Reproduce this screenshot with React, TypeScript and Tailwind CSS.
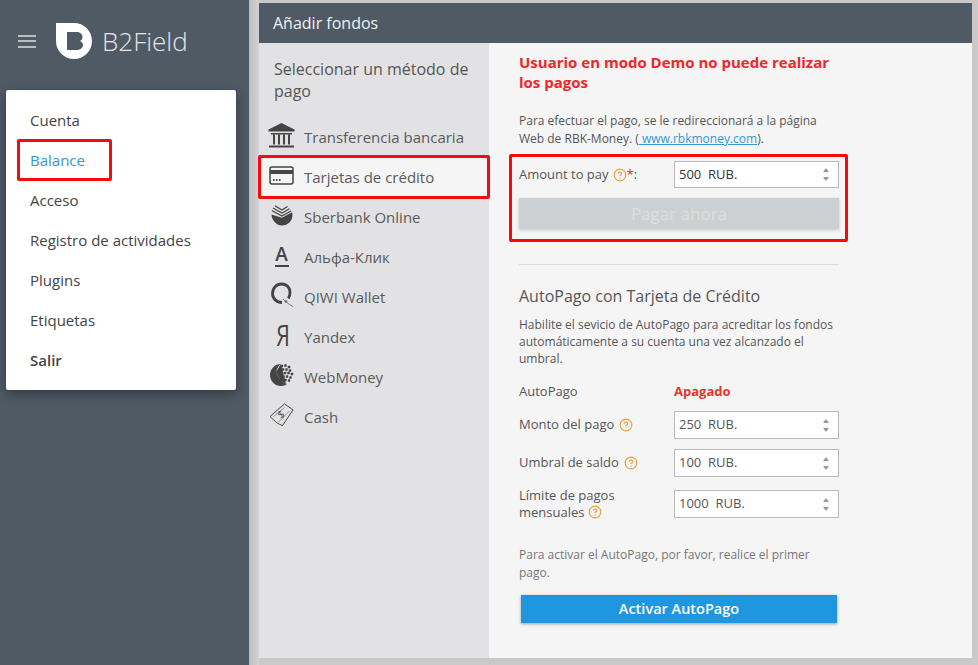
import { CircleHelp } from "lucide-react";

const MENU = ["Cuenta", "Balance", "Acceso", "Registro de actividades", "Plugins", "Etiquetas", "Salir"];

function Logo() {
  return (
    <svg width="36" height="36" viewBox="0 0 36 36" className="shrink-0">
      <path
        fillRule="evenodd"
        fill="#fff"
        d="M0 0H18A18 18 0 0 1 18 36A18 18 0 0 1 0 18ZM11 9V27H20C24 27 27 25 27 22C27 20 26 19 24 18C26 17 26.500 15.500 26.500 14C26.500 11 24 9 20 9Z"
      />
    </svg>
  );
}

function BankIcon() {
  return (
    <svg width="27" height="25" viewBox="0 0 27 25" fill="#444">
      <path d="M13.500 0L26.500 6.500V8.500H.5V6.500Z" />
      <path d="M3 10H24V11.500H3ZM1 22.500H26V24.500H1Z" />
      <path d="M5 11.500H7V21.500H5ZM10 11.500H12V21.500H10ZM15 11.500H17V21.500H15ZM20 11.500H22V21.500H20Z" />
    </svg>
  );
}

function CardIcon() {
  return (
    <svg width="25" height="19" viewBox="0 0 25 19">
      <rect x="1" y="1" width="23" height="17" rx="2" fill="none" stroke="#444" strokeWidth="1.500" />
      <rect x="1" y="4" width="23" height="4" fill="#444" />
      <path d="M4 13H5.500V15H4ZM7 13H8.500V15H7ZM10 13H11.500V15H10Z" fill="#444" />
    </svg>
  );
}

function SberIcon() {
  return (
    <svg width="22" height="21" viewBox="0 0 22 21" fill="none">
      <path d="M.5 9.500C.8 15.500 5.500 20.500 11 20.500C16.800 20.500 21.500 16 21.500 10C21.500 9 21.300 8 21 7.200L11 12.800Z" fill="#444" />
      <path d="M.8 5.500L11 11L20 6M2 3L11 8L18.500 3.800M4 .8L11 5L16.500 1.500" stroke="#444" strokeWidth="1.200" />
    </svg>
  );
}

function AlfaIcon() {
  return (
    <div className="mt-[2px] flex w-[16px] flex-col items-center">
      <span className="text-[19px] leading-[18px] font-semibold text-[#444]">А</span>
      <span className="mt-[2px] h-[2px] w-[14px] bg-[#444]" />
    </div>
  );
}

function QiwiIcon() {
  return (
    <svg width="24" height="26" viewBox="0 0 24 26" fill="none">
      <path d="M12 20.500C6.500 20.500 2.500 16.500 2.500 11.500C2.500 6 6.500 2 11.500 2C17 2 20 6 20 10.500C20 13 19.300 15 18.300 16.500" stroke="#444" strokeWidth="2.800" />
      <path d="M13 17C15 19 18 22 23 24.500" stroke="#777" strokeWidth="1" />
      <circle cx="16" cy="19.500" r="1.300" fill="#666" />
    </svg>
  );
}

function YandexIcon() {
  return <span className="block w-[16px] scale-x-[.72] text-center text-[30px] leading-[24px] text-[#444]">Я</span>;
}

function WebMoneyIcon() {
  const dots: [number, number][] = [
    [12, 3], [15.5, 2.5], [19, 4],
    [9.5, 6.5], [13, 6.5], [16.500, 6.5], [20, 7.5],
    [8, 10], [11.500, 10], [15, 10], [18.500, 10], [22, 11],
    [10, 13.500], [13.500, 13.500], [17, 13.500], [20.500, 14.500],
    [12, 17], [15.5, 17], [19, 17.500],
  ];
  return (
    <svg width="24" height="24" viewBox="0 0 24 24" fill="#444">
      <path d="M11 1A11 11 0 0 0 11 23C13.500 23 15.500 22.200 17 21C13 20 8 15 6.500 10C6 7 8 3 11 1Z" />
      <path d="M6 9L11 1L16 21L10 17Z" />
      {dots.map(([x, y]) => (
        <rect key={`${x}-${y}`} x={x - 1.2} y={y - 1.2} width="2.400" height="2.400" rx=".5" />
      ))}
    </svg>
  );
}

function CashIcon() {
  return (
    <svg width="25" height="24" viewBox="0 0 25 24" fill="none">
      <path d="M1 13.500L15.500 .8C17 2.500 20.500 4 24 7L13.500 22.500C11.500 22 9 20.500 7.500 19.500C6 18 3 15.500 1 13.500Z" stroke="#444" strokeWidth="1" />
      <path d="M4.500 13.500L15.500 4.500M9.500 19L20.500 8" stroke="#444" strokeWidth=".5" />
      <text x="12.500" y="15" textAnchor="middle" fontSize="10" fill="#444" transform="rotate(-38 12.500 12)">$</text>
    </svg>
  );
}

const METHODS = [
  { label: "Transferencia bancaria", icon: <BankIcon /> },
  { label: "Tarjetas de crédito", icon: <CardIcon />, active: true },
  { label: "Sberbank Online", icon: <SberIcon /> },
  { label: "Альфа-Клик", icon: <AlfaIcon /> },
  { label: "QIWI Wallet", icon: <QiwiIcon /> },
  { label: "Yandex", icon: <YandexIcon /> },
  { label: "WebMoney", icon: <WebMoneyIcon /> },
  { label: "Cash", icon: <CashIcon /> },
];

function Help() {
  return <CircleHelp size={14} strokeWidth={2} className="inline-block shrink-0 align-[-2px] text-[#e9a23b]" />;
}

function AmountInput({ value, short }: { value: string; short?: boolean }) {
  return (
    <div
      className={`flex w-[165px] shrink-0 items-center justify-between border border-[#b9b9b9] bg-white pr-[9px] pl-[4px] text-[13px] whitespace-pre ${
        short ? "h-[27px] text-[#333]" : "h-[28px] text-[#555]"
      }`}
    >
      <span>{value}</span>
      <span className="flex flex-col gap-[5px]">
        <span className="h-0 w-0 border-x-[3.5px] border-b-[4px] border-x-transparent border-b-[#999]" />
        <span className="h-0 w-0 border-x-[3.5px] border-t-[4px] border-x-transparent border-t-[#999]" />
      </span>
    </div>
  );
}

function RedBox({ className }: { className: string }) {
  return <div className={`pointer-events-none absolute rounded-[2px] border-[3px] border-[#f50b0b] ${className}`} />;
}

export default function App() {
  return (
    <div className="relative flex h-[665px] w-[978px] overflow-hidden bg-[#c9c9c9] font-['Open_Sans',sans-serif] text-[#555]">
      {/* sidebar */}
      <aside className="w-[249px] shrink-0 bg-[#4f5a65] pt-[23px] pl-[6px]">
        <div className="flex h-[36px] items-center pl-[12px]">
          <div className="flex w-[18px] flex-col gap-[3.5px]">
            <span className="h-[2px] bg-[#b8bfc2]" />
            <span className="h-[2px] bg-[#b8bfc2]" />
            <span className="h-[2px] bg-[#b8bfc2]" />
          </div>
          <div className="ml-[20px]">
            <Logo />
          </div>
          <span className="ml-[10px] text-[26px] leading-[36px] font-light text-[#e2e5e9]">B2Field</span>
        </div>
        <nav className="mt-[31px] w-[230px] rounded-[2px] bg-white py-[10px] shadow-[0_4px_12px_rgba(0,0,0,0.35)]">
          {MENU.map((item) => (
            <div
              key={item}
              className={`flex h-[40px] items-center pl-[24px] text-[15px] ${
                item === "Balance" ? "text-[#2f9bd6]" : "text-[#444]"
              } ${item === "Salir" ? "font-semibold" : ""}`}
            >
              {item}
            </div>
          ))}
        </nav>
      </aside>

      {/* edge shadow */}
      <div className="w-[10px] shrink-0 bg-gradient-to-r from-[#bdbdc3] to-[#d4d4d6]" />

      {/* main panel */}
      <main className="mt-[3px] flex h-[655px] w-[713px] shrink-0 flex-col">
        <header className="flex h-[40px] shrink-0 items-center bg-[#4f5a65] pl-[14px] text-[16px] text-[#f0f1f2]">
          Añadir fondos
        </header>
        <div className="flex min-h-0 flex-1">
          <section className="w-[230px] shrink-0 bg-[#e2e2e4] pt-[15px]">
            <h2 className="mb-[15px] pr-[10px] pl-[15px] text-[16px] leading-[22px] text-[#555]">
              Seleccionar un método de pago
            </h2>
            {METHODS.map((m) => (
              <div key={m.label} className={`flex h-[40px] items-center ${m.active ? "bg-[#f5f5f5]" : ""}`}>
                <div className="mb-[4px] flex w-[45px] shrink-0 justify-center">{m.icon}</div>
                <span className="text-[15px] text-[#5a5a5a]">{m.label}</span>
              </div>
            ))}
          </section>

          <section className="flex-1 bg-[#f5f5f5] pt-[9px] pl-[30px]">
            <div className="w-[320px]">
              <h3 className="text-[15px] leading-[20px] font-bold text-[#f1262b]">
                Usuario en modo Demo no puede realizar los pagos
              </h3>
              <p className="mt-[20px] text-[12px] leading-[18px] text-[#555]">
                Para efectuar el pago, se le redireccionará a la página
                <br />
                Web de RBK-Money. (<span className="text-[#2f9bd6] underline"> www.rbkmoney.com</span>).
              </p>
              <div className="mt-[13px] flex items-center justify-between">
                <span className="flex items-center gap-[4px] text-[13px] text-[#555]">
                  Amount to pay <Help />
                  <span className="-ml-[4px]">
                    <span className="text-[#e01b1b]">*</span>:
                  </span>
                </span>
                <AmountInput value="500  RUB." short />
              </div>
              <button className="mt-[10px] block h-[31px] w-full bg-[#cdd0d2] text-[17px] text-[#dcdedf] shadow-[0_1px_3px_rgba(0,0,0,0.2)]">
                Pagar ahora
              </button>

              <hr className="mt-[35px] border-[#dcdcdc]" />

              <h3 className="mt-[19px] text-[16px] leading-[24px] text-[#555]">AutoPago con Tarjeta de Crédito</h3>
              <p className="mt-[8px] text-[12px] leading-[17px] text-[#555]">
                Habilite el sevicio de AutoPago para acreditar los fondos
                <br />
                automáticamente a su cuenta una vez alcanzado el
                <br />
                umbral.
              </p>
              <div className="mt-[15px] flex h-[20px] items-center text-[13px]">
                <span className="w-[155px]">AutoPago</span>
                <span className="font-bold text-[#e5352c]">Apagado</span>
              </div>
              <div className="mt-[9px] flex items-center justify-between">
                <span className="flex items-center gap-[5px] text-[13px]">
                  Monto del pago <Help />
                </span>
                <AmountInput value="250  RUB." />
              </div>
              <div className="mt-[10px] flex items-center justify-between">
                <span className="flex items-center gap-[5px] text-[13px]">
                  Umbral de saldo <Help />
                </span>
                <AmountInput value="100  RUB." />
              </div>
              <div className="mt-[10px] flex items-center justify-between">
                <span className="w-[130px] text-[13px] leading-[17px]">
                  Límite de pagos mensuales <Help />
                </span>
                <AmountInput value="1000  RUB." />
              </div>
              <p className="mt-[25px] text-[12px] leading-[18px] text-[#777]">
                Para activar el AutoPago, por favor, realice el primer
                <br />
                pago.
              </p>
              <button className="mt-[13px] ml-[2px] block h-[28px] w-[316px] bg-[#1e97e0] text-[14.500px] font-semibold text-white shadow-[0_1px_3px_rgba(0,0,0,0.35)]">
                Activar AutoPago
              </button>
            </div>
          </section>
        </div>
      </main>

      {/* annotation boxes drawn over the screenshot */}
      <RedBox className="top-[139px] left-[17px] h-[42px] w-[95px]" />
      <RedBox className="top-[155px] left-[258px] h-[44px] w-[232px]" />
      <RedBox className="top-[154px] left-[509px] h-[88px] w-[339px]" />
    </div>
  );
}
